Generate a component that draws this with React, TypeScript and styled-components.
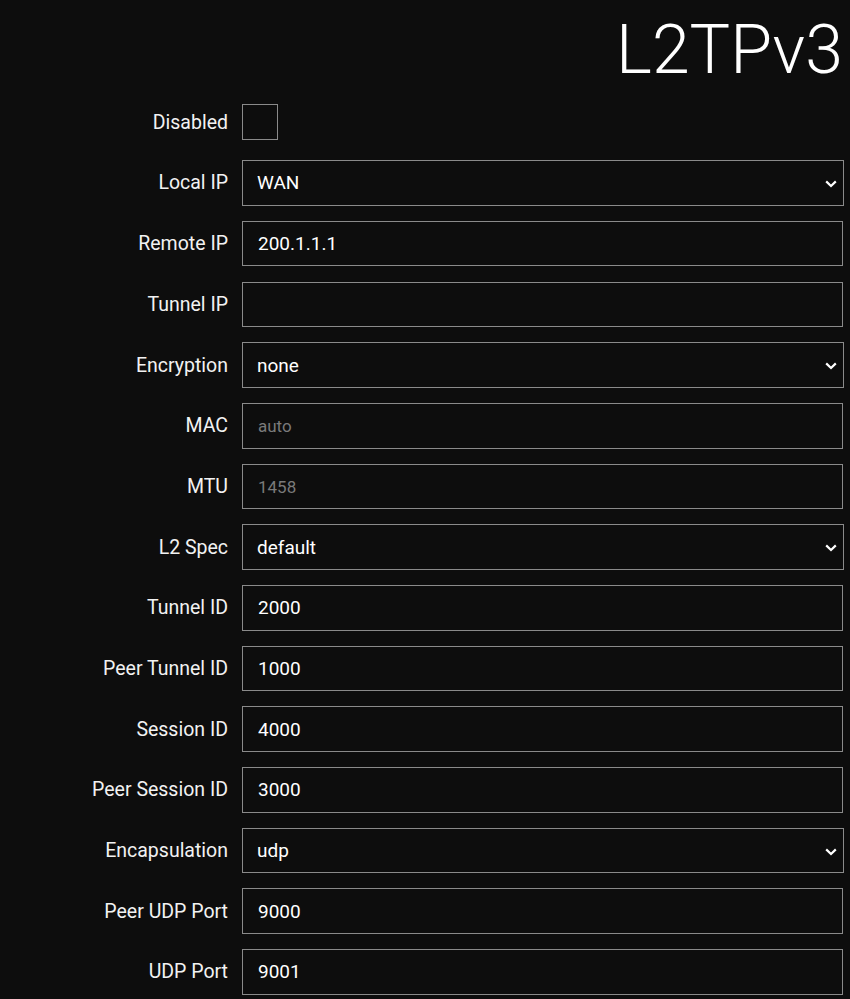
import React from 'react';
import styled, { createGlobalStyle } from 'styled-components';

const GlobalStyle = createGlobalStyle`
  html, body {
    margin: 0;
    padding: 0;
    background: #0d0d0d;
    color: #f2f2f2;
    font-family: Roboto, "Noto Sans", "Liberation Sans", sans-serif;
  }
`;

const Page = styled.div`
  width: 850px;
  min-height: 999px;
  box-sizing: border-box;
  padding: 0 7px 0 0;
  background: #0d0d0d;
`;

const Title = styled.h1`
  margin: 8px 0 7.5px;
  font-size: 68px;
  font-weight: 300;
  line-height: 84px;
  text-align: right;
  color: #ffffff;
`;

const Form = styled.div`
  display: grid;
  grid-template-columns: 228px 601px;
  grid-auto-rows: 45.6px;
  column-gap: 14px;
  row-gap: 15.1px;
  align-items: center;
`;

const Label = styled.label`
  text-align: right;
  font-size: 19.5px;
  color: #f2f2f2;
  white-space: nowrap;
`;

const Field = styled.input`
  box-sizing: border-box;
  width: 100%;
  height: 45.6px;
  padding: 0 15px;
  background: #0d0d0d;
  border: 1px solid #8a8a8a;
  border-radius: 0;
  color: #ffffff;
  font-family: inherit;
  font-size: 19px;
  outline: none;

  &::placeholder {
    color: #7a7a7a;
    font-size: 17px;
  }
`;

const Check = styled.input.attrs({ type: 'checkbox' })`
  appearance: none;
  margin: 0;
  width: 36px;
  height: 36px;
  border: 1px solid #8a8a8a;
  background: transparent;
`;

const SelectWrap = styled.div`
  position: relative;
  width: calc(100% + 1px);
  height: 45.6px;
`;

const Select = styled.select`
  box-sizing: border-box;
  appearance: none;
  width: 100%;
  height: 100%;
  padding: 0 40px 0 14px;
  background: #0d0d0d;
  border: 1px solid #8a8a8a;
  border-radius: 0;
  color: #ffffff;
  font-family: inherit;
  font-size: 19px;
  outline: none;
`;

const Chevron = styled.svg`
  position: absolute;
  right: 7px;
  top: 50%;
  width: 12px;
  height: 8px;
  margin-top: -3px;
  pointer-events: none;
`;

type Row =
  | { kind: 'check'; label: string }
  | { kind: 'select'; label: string; value: string }
  | { kind: 'input'; label: string; value?: string; placeholder?: string };

const ROWS: Row[] = [
  { kind: 'check', label: 'Disabled' },
  { kind: 'select', label: 'Local IP', value: 'WAN' },
  { kind: 'input', label: 'Remote IP', value: '200.1.1.1' },
  { kind: 'input', label: 'Tunnel IP' },
  { kind: 'select', label: 'Encryption', value: 'none' },
  { kind: 'input', label: 'MAC', placeholder: 'auto' },
  { kind: 'input', label: 'MTU', placeholder: '1458' },
  { kind: 'select', label: 'L2 Spec', value: 'default' },
  { kind: 'input', label: 'Tunnel ID', value: '2000' },
  { kind: 'input', label: 'Peer Tunnel ID', value: '1000' },
  { kind: 'input', label: 'Session ID', value: '4000' },
  { kind: 'input', label: 'Peer Session ID', value: '3000' },
  { kind: 'select', label: 'Encapsulation', value: 'udp' },
  { kind: 'input', label: 'Peer UDP Port', value: '9000' },
  { kind: 'input', label: 'UDP Port', value: '9001' },
];

function Dropdown({ value }: { value: string }) {
  return (
    <SelectWrap>
      <Select defaultValue={value}>
        <option value={value}>{value}</option>
      </Select>
      <Chevron viewBox="0 0 12 8">
        <path d="M1.2 1.4 6 6 10.8 1.4" fill="none" stroke="#fff" strokeWidth="2.2" />
      </Chevron>
    </SelectWrap>
  );
}

export default function App() {
  return (
    <>
      <GlobalStyle />
      <Page>
        <Title>L2TPv3</Title>
        <Form>
          {ROWS.map((row) => (
            <React.Fragment key={row.label}>
              <Label>{row.label}</Label>
              {row.kind === 'check' && <Check />}
              {row.kind === 'select' && <Dropdown value={row.value} />}
              {row.kind === 'input' && (
                <Field type="text" defaultValue={row.value ?? ''} placeholder={row.placeholder} />
              )}
            </React.Fragment>
          ))}
        </Form>
      </Page>
    </>
  );
}
